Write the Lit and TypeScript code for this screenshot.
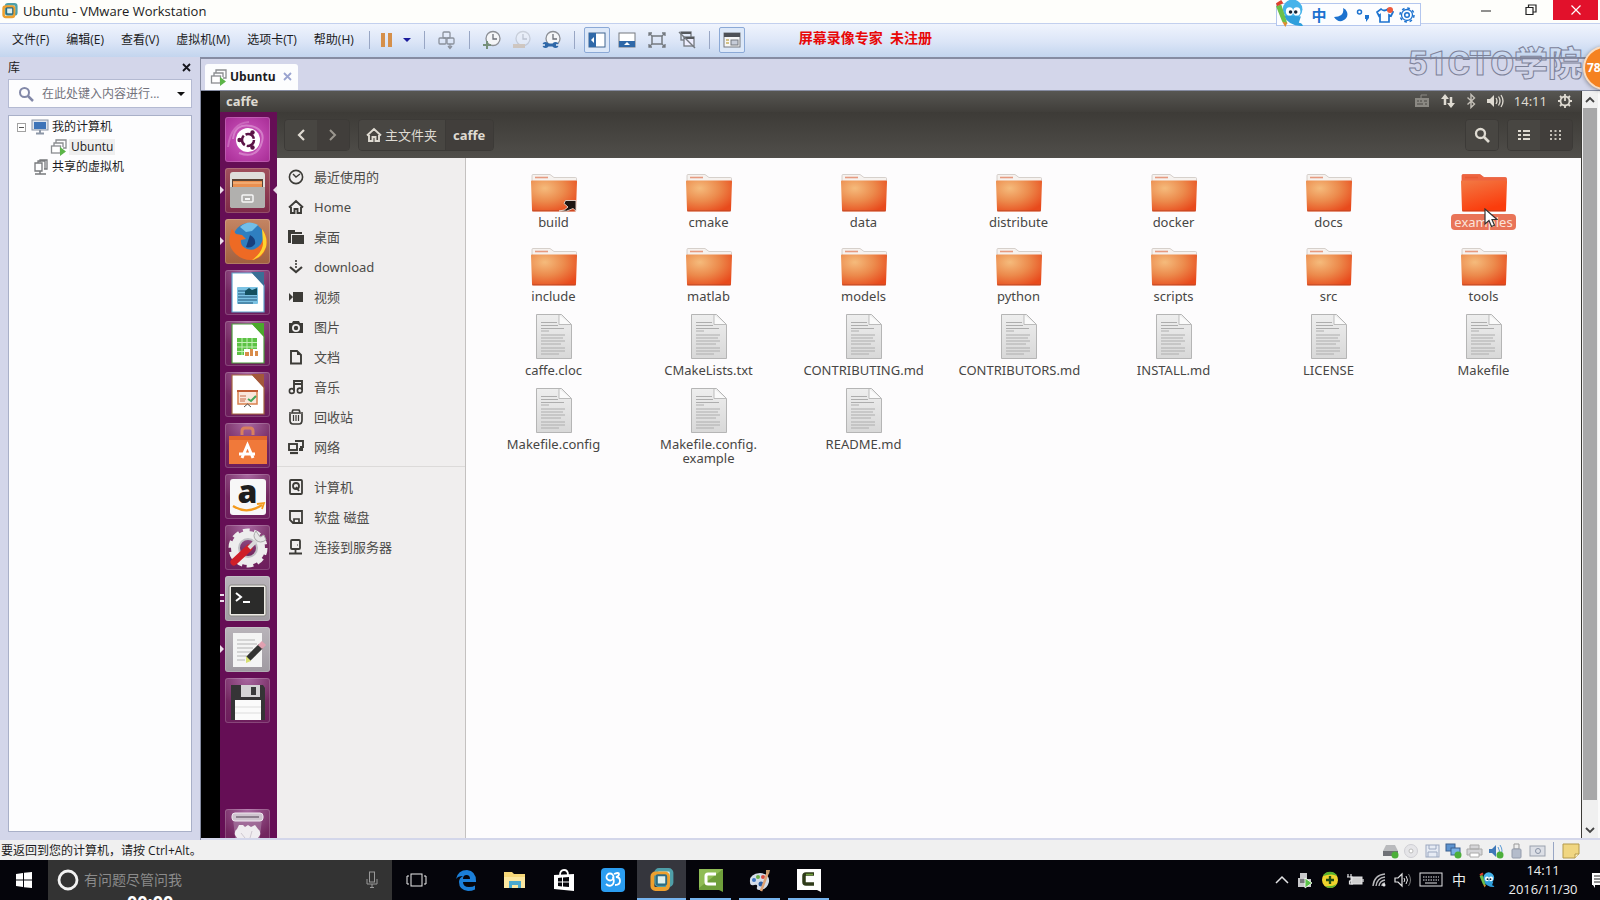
import { LitElement, html, svg, css, TemplateResult, SVGTemplateResult } from "lit";
import { customElement, state } from "lit/decorators.js";
import { classMap } from "lit/directives/class-map.js";

const icon = (w: number, h: number, body: SVGTemplateResult, box = `0 0 ${w} ${h}`) =>
  html`<svg width=${w} height=${h} viewBox=${box} fill="none" aria-hidden="true">${body}</svg>`;

/* ---------- VMware chrome icons ---------- */
const vmLogo = (size: number) => icon(size, size, svg`
  <rect x="5" y="1.500" width="13" height="13" rx="2.500" fill="#dff0ee" stroke="#4f9fa8" stroke-width="3"/>
  <rect x="2" y="4.500" width="13" height="13" rx="2.500" fill="none" stroke="#eea02e" stroke-width="3.200"/>
  <rect x="5.500" y="6" width="8" height="8" rx="1" fill="none" stroke="#2f6a80" stroke-width="1.600"/>`, "0 0 20 20");

const vmRunning = icon(18, 18, svg`
  <path d="M6 5V2h10v8h-3" stroke="#8a8d90" stroke-width="1.3"/><path d="M4 8V5h9v4" stroke="#8a8d90" stroke-width="1.3"/>
  <rect x="1.500" y="8" width="9" height="7" stroke="#8a8d90" stroke-width="1.3" fill="#fff"/>
  <path d="M10 9l6 4.500-6 4.500z" fill="#5cb548"/>`);
const sharedVm = icon(16, 18, svg`
  <path d="M7 4V2h7v9h-3M2 5h7v8H2zM5 5V3h7v8" stroke="#77797c" stroke-width="1.3"/><path d="M7 13v3M2 16h11" stroke="#77797c" stroke-width="1.500"/>`);
const monitor = icon(18, 16, svg`
  <rect x="1" y="1" width="16" height="10" fill="#dfe5ee" stroke="#8c96a6"/><rect x="3" y="3" width="12" height="7" fill="#3e74b8"/>
  <path d="M9 11v3M5 14.500h8" stroke="#8c96a6" stroke-width="2"/>`);
const magnifier = icon(16, 16, svg`<circle cx="6.500" cy="6.500" r="4.500" stroke="#8288a8" stroke-width="2"/><path d="M10 10l5 5" stroke="#8288a8" stroke-width="2.500"/>`);
const ctrlAltDel = icon(20, 20, svg`
  <rect x="6" y="2" width="7" height="6" rx="1" stroke="#8b919c" stroke-width="1.3"/>
  <rect x="2" y="8" width="7" height="6" rx="1" stroke="#8b919c" stroke-width="1.3"/><rect x="10" y="8" width="7" height="6" rx="1" stroke="#8b919c" stroke-width="1.3"/>
  <path d="M13 14v4m-2-2l2 2.500 2-2.500" stroke="#8b919c" stroke-width="1.3"/>`);
const clock = (kind: "add" | "back" | "manage") => icon(20, 20, svg`
  <g opacity=${kind === "back" ? 0.3 : 1}>
  <circle cx="11" cy="8.500" r="7" fill="#f5f6f8" stroke="#8d9096" stroke-width="1.3"/><path d="M11 4v5h4" stroke="#6c7078" stroke-width="1.3"/>
  ${kind === "add" ? svg`<path d="M1 15h8M5 11v8" stroke="#76907a" stroke-width="2"/>` : kind === "back"
    ? svg`<path d="M1 16h12" stroke="#c08a4a" stroke-width="4"/>`
    : svg`<path d="M3 15h10" stroke="#2f68a8" stroke-width="3"/><circle cx="3.500" cy="15" r="3" fill="#2f68a8"/><circle cx="13.500" cy="15" r="3" fill="#2f68a8"/><path d="M0 15h3M14 15h3" stroke="#e8eefa" stroke-width="1.500"/>`}
  </g>`);
const viewLibrary = icon(18, 16, svg`<rect x="1" y="1" width="16" height="14" fill="#fff" stroke="#41648f"/><rect x="1" y="1" width="7" height="14" fill="#2f68a8"/><path d="M6 5v6L3 8z" fill="#fff"/>`);
const viewThumb = icon(18, 16, svg`<rect x="1" y="1" width="16" height="14" fill="#fff" stroke="#74797f"/><rect x="1" y="9" width="16" height="6" fill="#2f68a8"/><path d="M6 13h6L9 10z" fill="#fff"/>`);
const fullScreen = icon(18, 16, svg`<rect x="4" y="4" width="10" height="8" stroke="#74797f" stroke-width="1.500"/><path d="M1 4V1h3M14 1h3v3M17 12v3h-3M4 15H1v-3M1 1l3 3M17 1l-3 3M17 15l-3-3M1 15l3-3" stroke="#74797f" stroke-width="1.300"/>`);
const unity = icon(18, 18, svg`<rect x="3" y="1" width="10" height="8" stroke="#74797f" stroke-width="1.300"/><path d="M3 2h10" stroke="#55585c" stroke-width="2"/><rect x="6" y="6" width="10" height="9" fill="#eef" stroke="#74797f" stroke-width="1.300"/><path d="M6 7h10" stroke="#55585c" stroke-width="2"/><path d="M1 1l16 16" stroke="#74797f" stroke-width="1.500"/>`);
const consoleView = icon(18, 16, svg`<rect x="1" y="1" width="16" height="14" fill="#f6f6f6" stroke="#74797f"/><rect x="1" y="1" width="16" height="4" fill="#4d5056"/><path d="M3 8h3M3 11h3" stroke="#c7b060" stroke-width="1.500"/><rect x="8" y="8" width="7" height="5" fill="#c6ccd8" stroke="#74797f"/>`);

/* ---------- Guest panel icons ---------- */
const S = "#dfdbd2";
const panelKeyboard = icon(16, 16, svg`<path d="M7 5V2h6" stroke="#8b8983"/><rect x="1" y="5" width="14" height="9" fill="#8b8983"/><path d="M3 8h2m1 0h2m2 0h3M3 11h6m2 0h2" stroke="#4a4844"/>`);
const panelNet = icon(16, 16, svg`<path d="M5 12V3M11 4v9" stroke=${S} stroke-width="2.500"/><path d="M1 6l4-5 4 5zM7 10l4 5 4-5z" fill=${S}/>`);
const bluetooth = icon(10, 16, svg`<path d="M1.500 4.500l7 6.500L5 14.500v-13L8.500 5l-7 6.500" stroke="#c4c0b8" stroke-width="1.400"/>`);
const panelSound = icon(18, 16, svg`<path d="M1 6h3l4-4v12l-4-4H1z" fill=${S}/><path d="M10 5q2 3 0 6M12.500 3.500q3 4.500 0 9M15 2q4 6 0 12" stroke=${S} stroke-width="1.300"/>`);
const panelGear = icon(16, 16, svg`<circle cx="8" cy="8" r="4.500" stroke=${S} stroke-width="1.800"/><path d="M8 1v7M3 3l2 2M13 3l-2 2M1 8h3M12 8h3M3 13l2-2M13 13l-2-2M8 12v3" stroke=${S} stroke-width="1.800"/>`);
const searchGlyph = icon(16, 16, svg`<circle cx="6.500" cy="6.500" r="4.500" stroke=${S} stroke-width="2.300"/><path d="M10 10l5 5" stroke=${S} stroke-width="2.600"/>`);
const listGlyph = icon(14, 12, svg`<path d="M1 2h3M1 6h3M1 10h3M6 2h7M6 6h7M6 10h7" stroke=${S} stroke-width="2"/>`);
const gridGlyph = icon(14, 12, svg`<path d="M1 2h12M1 6h12M1 10h12" stroke="#c4c0b8" stroke-width="2" stroke-dasharray="2 2.500"/>`);
const homeGlyph = (c: string) => icon(16, 16, svg`<path d="M1 8.500L8 2l7 6.500M3 8v6h3.500v-4h3v4H13V8" stroke=${c} stroke-width="1.900"/>`);

/* ---------- Sidebar icons ---------- */
const D = "#3c3b37";
const places: { label: string; glyph: TemplateResult }[] = [
  { label: "最近使用的", glyph: icon(16, 16, svg`<circle cx="8" cy="8" r="6.600" stroke=${D} stroke-width="1.600"/><path d="M5 5l3 3 4-3" stroke=${D} stroke-width="1.400"/>`) },
  { label: "Home", glyph: homeGlyph(D) },
  { label: "桌面", glyph: icon(16, 16, svg`<path d="M0 1h7v2h7v2H3v9H0z" fill=${D}/><path d="M4 6h12v9H4z" fill=${D}/>`) },
  { label: "download", glyph: icon(16, 16, svg`<path d="M8 1v8" stroke=${D} stroke-width="1.600" stroke-dasharray="2 1"/><path d="M2 8l6 5 6-5" stroke=${D} stroke-width="2.200"/>`) },
  { label: "视频", glyph: icon(16, 16, svg`<path d="M5 3h10v10H5zM1 4l4 4-4 4z" fill=${D}/>`) },
  { label: "图片", glyph: icon(16, 16, svg`<path fill-rule="evenodd" d="M1 4h3l1-2h6l1 2h3v10H1zM8 5a4 4 0 100 8 4 4 0 000-8z" fill=${D}/><circle cx="8" cy="9" r="2.200" fill=${D}/>`) },
  { label: "文档", glyph: icon(16, 16, svg`<path d="M3 2h6l4 4v8.500H3z" stroke=${D} stroke-width="1.900"/><path d="M9 2v4h4z" fill=${D}/>`) },
  { label: "音乐", glyph: icon(16, 16, svg`<path d="M6 12V2h8v9M6 5h8" stroke=${D} stroke-width="1.900"/><circle cx="3.800" cy="12" r="2.400" stroke=${D} stroke-width="1.600"/><circle cx="11.800" cy="11.500" r="2.400" stroke=${D} stroke-width="1.600"/>`) },
  { label: "回收站", glyph: icon(16, 16, svg`<path d="M1 4h14M4 3l1-2h6l1 2M2 5v6q0 4 3 4h6q3 0 3-4V5" stroke=${D} stroke-width="1.700"/><path d="M5.500 6v6M8 6v6M10.500 6v6" stroke=${D} stroke-width="1.200"/>`) },
  { label: "网络", glyph: icon(16, 16, svg`<rect x="1" y="5" width="8" height="6" stroke=${D} stroke-width="1.900"/><path d="M2 14h8" stroke=${D} stroke-width="2.200"/><path d="M7 2h8v6h-3" stroke=${D} stroke-width="1.900"/><path d="M11 9h4v3h-4z" fill=${D}/>`) },
];
const devices: { label: string; glyph: TemplateResult }[] = [
  { label: "计算机", glyph: icon(16, 16, svg`<rect x="2" y="1" width="12" height="14" rx="1" stroke=${D} stroke-width="1.800"/><circle cx="8" cy="7" r="3" stroke=${D} stroke-width="1.800"/><path d="M8 8l3 4" stroke=${D} stroke-width="1.800"/>`) },
  { label: "软盘 磁盘", glyph: icon(16, 16, svg`<path d="M2 2h12v12H5l-3-3z" stroke=${D} stroke-width="1.800"/><path d="M6 14v-4h5v4" stroke=${D} stroke-width="1.700"/>`) },
  { label: "连接到服务器", glyph: icon(16, 16, svg`<rect x="3" y="1" width="9" height="9" rx="1" stroke=${D} stroke-width="1.800"/><path d="M7.500 10v4M1 14.500h13" stroke=${D} stroke-width="1.800"/><path d="M9 6h1" stroke=${D}/>`) },
];

/* ---------- Launcher icons, drawn in a 45 px tile ---------- */
const tile = (body: SVGTemplateResult) => icon(45, 45, body);
const page = (edge: string, corner: string, inner: SVGTemplateResult) => tile(svg`
  <path d="M7 3h21l11 12v27H7z" fill="#fff" stroke=${edge} stroke-width="1.200"/><path d="M26 2h13v14z" fill=${corner}/>${inner}`);
interface Launch { name: string; tone: string; art: TemplateResult; running?: "one" | "two"; focused?: boolean }
const launchers: Launch[] = [
  { name: "Dash", tone: "dash", art: tile(svg`
    <path d="M8 22q2-16 18-13Q42 13 36 28 30 42 14 36" stroke="#e3a2da" stroke-width="2" opacity=".6"/><path d="M3 30Q6 6 24 5" stroke="#e3a2da" stroke-width="2" opacity=".4"/>
    <circle cx="23" cy="23" r="12" fill="#fff"/><circle cx="23" cy="23" r="6" stroke="#5b1446" stroke-width="2.500" stroke-dasharray="10.500 2"/>
    <g fill="#5b1446"><circle cx="14.500" cy="23" r="2.200"/><circle cx="27.500" cy="15.500" r="2.200"/><circle cx="27.500" cy="30.500" r="2.200"/></g>`) },
  { name: "文件", tone: "files", running: "one", focused: true, art: tile(svg`
    <rect x="5" y="4" width="35" height="36" rx="3" fill="#dfdedb"/><rect x="7" y="11" width="31" height="8" fill="#5a4334"/>
    <path d="M8 13h29v6H8z" fill="#e98f50"/><path d="M8 15h29" stroke="#f8c391"/><path d="M5 19h35v19q0 2-2 2H7q-2 0-2-2z" fill="#b1b0ae"/>
    <rect x="17" y="27" width="11" height="7" rx="1" stroke="#f6f6f6" stroke-width="1.500"/><path d="M20 31h5" stroke="#f6f6f6" stroke-width="2"/>`) },
  { name: "Firefox", tone: "firefox", running: "one", art: tile(svg`
    <circle cx="24" cy="20" r="16" fill="#2f7fc0"/><path d="M15 8q8-8 18-2l-6 6-6 1z" fill="#72bee8"/><path d="M25 16q6 3 5 9-4 5-9 3z" fill="#173f7d"/>
    <path d="M6 12q-4 12 2 20 8 10 20 9 13-3 14-18 0-8-5-13 3 8-1 15-6 8-14 5-7-3-6-9l5-1-4-4-6-1-4-5z" fill="#ee6a24"/>
    <path d="M37 10q6 8 4 18-4 11-14 13 10-7 11-16z" fill="#ffd32e"/>`) },
  { name: "Writer", tone: "plum", art: page("#5fa5ce", "#3a6f96", svg`<rect x="12" y="17" width="21" height="17" rx="1" fill="#7cc3e4"/><path d="M13 21h8M13 24h8M13 27h19M13 30h19M13 33h15" stroke="#1f5578"/><path d="M20 25v-4l4-3 3 2 5-2v7z" fill="#14505f"/>`) },
  { name: "Calc", tone: "plum", art: page("#4b9c3d", "#4ba92c", svg`<rect x="12" y="17" width="20" height="17" fill="#5cc244"/><path d="M12 21.500h20M12 26h20M12 30.500h20M17 17v17M22 17v17M27 17v17" stroke="#c2f0b5"/><rect x="19" y="28" width="15" height="8" fill="#fff"/><path d="M20 35v-4h4v4zM25 35v-7h3v7zM30 35v-5h3v5z" fill="#d98c4a"/>`) },
  { name: "Impress", tone: "plum", art: page("#a5653f", "#a3573a", svg`<rect x="13" y="19" width="19" height="13" fill="#fae6db" stroke="#d9814d" stroke-width="1.500"/><path d="M12 19h21" stroke="#c05b34" stroke-width="2"/><path d="M15 24h6M15 27h6M15 29h5" stroke="#c76a48"/><path d="M23 27l3 2 5-5" stroke="#46a55a" stroke-width="2"/><path d="M19 35l3.500-3 3.500 3" stroke="#555"/>`) },
  { name: "软件中心", tone: "plum", art: tile(svg`
    <path d="M17 12V8q0-3 3-3h5q3 0 3 3v4" stroke="#d9805e" stroke-width="3"/><path d="M4 13h38v28H4z" fill="#f0793a"/><path d="M4 13h38v4H4z" fill="#e0642d"/>
    <path d="M17 35l5.500-13L28 35M17 31h13" stroke="#fff" stroke-width="3"/><path d="M14 31h3" stroke="#fff" stroke-width="3"/>`) },
  { name: "Amazon", tone: "plum", art: tile(svg`
    <rect x="5" y="5" width="36" height="36" rx="3" fill="#f7f7f7"/>
    <text x="22.500" y="29" text-anchor="middle" font-family="Open Sans" font-weight="800" font-size="32" fill="#1d1d1d">a</text>
    <path d="M8 32q14 9 29-1" stroke="#f39a1d" stroke-width="2.200"/><path d="M32 30l7-1-2 6" stroke="#f39a1d" stroke-width="1.800"/>`) },
  { name: "系统设置", tone: "plum", art: tile(svg`
    <circle cx="23" cy="23" r="13" stroke="#ededed" stroke-width="8"/><circle cx="23" cy="23" r="17" stroke="#ededed" stroke-width="5" stroke-dasharray="6.500 4.180"/>
    <circle cx="23" cy="23" r="9" stroke="#bfbfc4" stroke-width="2"/><path d="M9 37l15-14" stroke="#cf1f28" stroke-width="7" stroke-linecap="round"/><path d="M24 23l8-8" stroke="#d9d9d9" stroke-width="4"/>
    <path d="M31 6q-4 5 0 9t10 0l-2-5-4 2-2-3z" fill="#e6e6e6" stroke="#a9a9a9"/>`) },
  { name: "终端", tone: "silver", running: "two", art: tile(svg`
    <rect x="4" y="9" width="37" height="31" rx="2" fill="#eceae4" stroke="#8a8985"/><rect x="6" y="11" width="33" height="27" fill="#2b2b2a"/>
    <path d="M11 17l5 4-5 4" stroke="#fff" stroke-width="2"/><path d="M18 26h7" stroke="#fff" stroke-width="2"/>`) },
  { name: "gedit", tone: "silver", running: "one", art: tile(svg`
    <rect x="8" y="6" width="29" height="34" fill="#f4f4f4"/><path d="M12 13h18M12 17h20M12 21h16M12 25h14M12 29h10M12 33h8" stroke="#c9c9c9" stroke-width="1.500"/>
    <path d="M23 32l13-13" stroke="#333" stroke-width="6"/><path d="M35 20l4-4" stroke="#e0a0b0" stroke-width="6"/><path d="M21 29l5 5-5 2z" fill="#d8e070"/>`) },
  { name: "软盘", tone: "plum", art: tile(svg`
    <path d="M6 7h32l2 3v32H6z" fill="#353436"/><rect x="16" y="7" width="19" height="12" fill="#d4d3d5"/><rect x="26" y="9" width="5" height="8" fill="#3a3a3c"/>
    <rect x="10" y="22" width="26" height="20" fill="#fbfbfb"/><path d="M10 29h26M10 35h26" stroke="#ddd"/>`) },
];
const trashArt = tile(svg`
  <path d="M8 10l4 35h21l4-35z" fill="#b48fb2" opacity=".5"/><rect x="7" y="4" width="31" height="8" rx="3" fill="#cfc4cf" stroke="#f0e8f0"/><path d="M11 8h23" stroke="#8d7f8e" stroke-width="2"/>
  <path d="M10 26q-1-4 2-6l2-4h4l2 2 3-2 3 2 4-2 3 4q3 2 2 6l-2 3v16H12V29z" fill="#f0edf0"/><path d="M16 24l4 5M27 22l-2 7" stroke="#cfc8d0"/>`);

/* ---------- File icons ---------- */
const folder = (selected: boolean, link: boolean) => icon(48, 40, svg`
  <defs>
    <radialGradient id="face" cx=".3" cy=".25" r=".95"><stop offset="0" stop-color="#f5bb7c"/><stop offset=".45" stop-color="#ec8a4c"/><stop offset=".9" stop-color="#e84a1c"/></radialGradient>
    <linearGradient id="picked" x1="0" y1="0" x2=".4" y2="1"><stop offset="0" stop-color="#f27a45"/><stop offset="1" stop-color="#fb3c0c"/></linearGradient>
  </defs>
  <path d="M2 10V2.500q0-1 1-1h17l4 3h21.500q1 0 1 1V10z" fill=${selected ? "#ee6440" : "#f6f2ef"} stroke=${selected ? "#ea5c38" : "#cdc5c0"} stroke-width=".8"/>
  <path d="M5 4.500h13" stroke=${selected ? "#e85a35" : "#e69a80"} stroke-width="1.600"/>
  <path d="M1 8.500q0-1 1-1h44q1 0 1 1L46 37q0 1.500-1.500 1.500h-41Q2 38.500 2 37z" fill=${selected ? "url(#picked)" : "url(#face)"}/>
  <path d="M2 37.800h44" stroke="#a8452a" opacity=".6"/>
  ${link ? svg`<path d="M29 38q6 0 9-4l-4-3.500 1.500-3H46V38l-3-2.500q-6 4-14 2.500z" fill="#1e1512" stroke="#e8d8cf" stroke-width=".9"/>` : null}`);
const textFile = icon(38, 48, svg`
  <defs><linearGradient id="sheet" x1="0" y1="0" x2="0" y2="1"><stop offset="0" stop-color="#eeeeee"/><stop offset="1" stop-color="#d8d8d8"/></linearGradient></defs>
  <path d="M1.500 1.500h25l10 10v34h-35z" fill="url(#sheet)" stroke="#b5b5b5"/><path d="M24 2v9.500h12" fill="#fafafa" stroke="#bbb"/>
  <path d="M6 9.500h16M6 12.500h17M6 15.500h23M6 18h8M6 22h24M6 25h22M6 28h24M6 31h20M6 35h24M6 38h24M6 41h18" stroke="#adadad" stroke-width="1.100"/>`);

const files = [
  "build", "cmake", "data", "distribute", "docker", "docs", "examples",
  "include", "matlab", "models", "python", "scripts", "src", "tools",
  "caffe.cloc", "CMakeLists.txt", "CONTRIBUTING.md", "CONTRIBUTORS.md", "INSTALL.md", "LICENSE", "Makefile",
  "Makefile.config", "Makefile.config.example", "README.md",
].map((name, i) => ({ name, dir: i < 14, link: name === "build" }));

/* ---------- Status bar icons ---------- */
const ok = svg`<circle cx="13" cy="12" r="3.500" fill="#4caf3a"/>`;
const statusIcons: { name: string; art: TemplateResult }[] = [
  { name: "硬盘", art: icon(18, 16, svg`<path d="M4 2h9l3 6H1z" fill="#b9babd"/><path d="M1 8h15v5H1z" fill="#6f7176"/>${ok}`) },
  { name: "光驱", art: icon(18, 16, svg`<circle cx="8" cy="8" r="6.500" fill="#e5e5e8" stroke="#cfcfd4"/><circle cx="8" cy="8" r="2" fill="#fff" stroke="#bbb"/>`) },
  { name: "软盘", art: icon(18, 16, svg`<rect x="2" y="2" width="13" height="12" fill="#e6ebf4" stroke="#9ba8c0"/><path d="M5 2v4h7V2M4 14V9h9v5" stroke="#9ba8c0"/>`) },
  { name: "网络适配器", art: icon(18, 16, svg`<rect x="1" y="1" width="9" height="7" fill="#5c93cf" stroke="#3a5f8e"/><rect x="6" y="5" width="9" height="7" fill="#7ab0e6" stroke="#3a5f8e"/>${ok}`) },
  { name: "打印机", art: icon(18, 16, svg`<path d="M4 2h9v4H4zM1 6h15v6H1z" fill="#d5d5d8" stroke="#aaa"/><path d="M4 10h9v4H4z" fill="#fff" stroke="#aaa"/>`) },
  { name: "声卡", art: icon(18, 16, svg`<path d="M2 6h3l4-4v12l-4-4H2z" fill="#3e78b8"/><path d="M11 4q3 4 0 8M13 2q4 6 0 11" stroke="#5b9bd5"/>${ok}`) },
  { name: "USB", art: icon(18, 16, svg`<path d="M6 1h5v5H6z" fill="#eee" stroke="#999"/><rect x="4" y="6" width="9" height="9" rx="1" fill="#b4bccb" stroke="#949cac"/>`) },
  { name: "显示器", art: icon(18, 16, svg`<rect x="1" y="3" width="15" height="10" fill="#dcdfe6" stroke="#9aa1ae"/><circle cx="9" cy="8" r="2.500" stroke="#8892a5"/>`) },
];

/* ---------- Windows taskbar icons ---------- */
const taskItems: { name: string; art: TemplateResult; run?: boolean; active?: boolean }[] = [
  { name: "任务视图", art: icon(22, 16, svg`<rect x="5" y="2" width="11" height="12" stroke="#eee"/><path d="M3 4H1v8h2M18 4h2v8h-2" stroke="#eee"/>`) },
  { name: "Edge", art: icon(22, 22, svg`<path d="M1 10Q3 1 12 1q9 1 9 11v1H8q0 5 6 5 4 0 6-1.500v4Q17 22 13 22 4 21 4 13q0-4 4-6-5 0-7 3zM8 10h7q0-4-3.500-4T8 10z" fill="#1b7fd8"/>`) },
  { name: "文件资源管理器", art: icon(24, 20, svg`<path d="M1 2h8l2 2h11v14H1z" fill="#f6d778"/><path d="M1 7h21v11H1z" fill="#fbe7a0"/><path d="M6 18v-7h12v7h-3v-3H9v3z" fill="#4ba9cf"/>`) },
  { name: "应用商店", art: icon(24, 24, svg`<path d="M8 7q0-5 4-5t4 5" stroke="#fff" stroke-width="1.800"/><path d="M2 7l20-1v17L2 21z" fill="#fff"/><path d="M6 10l4-.5v4H6zM11 9.500l6-.5v4.500h-6zM6 14.500h4v4l-4-.5zM11 14.500h6V19l-6-.5z" fill="#07070c"/>`) },
  { name: "剪辑", art: icon(24, 24, svg`<rect width="24" height="24" rx="4" fill="#2b9df0"/><circle cx="9" cy="9" r="3.500" stroke="#fff" stroke-width="1.800"/><path d="M12 9q2 6-1 8-3 2-6-1M13 6q5-2 5 0t-3 3q4 0 4 4t-5 4" stroke="#fff" stroke-width="1.800"/>`) },
  { name: "VMware Workstation", art: vmLogo(24), run: true, active: true },
  { name: "Camtasia", art: icon(24, 24, svg`<path d="M0 1h24v23l-4-2H0z" fill="#6f9f3b"/><path d="M0 1h24L0 20z" fill="#8fbc55"/><path d="M17 6H9q-2 0-2 2v6q0 2 2 2h8" stroke="#fff" stroke-width="3"/>`), run: true },
  { name: "画图", art: icon(24, 24, svg`<path d="M2 14Q1 6 12 5q10 1 9 9-2 8-10 8-3 0-2-3t-3-2q-4 1-4-3z" fill="#d4dde8"/><circle cx="6" cy="12" r="2" fill="#3a75c4"/><circle cx="10" cy="9" r="2" fill="#6bb04a"/><circle cx="15" cy="9" r="2" fill="#d94c3f"/><circle cx="13" cy="16" r="2.500" fill="#2c5fa8"/><path d="M13 23l7-19" stroke="#e0a374" stroke-width="2.500"/><path d="M18 2h4l-1 4-3-1z" fill="#c49a6c"/>`), run: true },
  { name: "Camtasia Recorder", art: icon(24, 24, svg`<path d="M0 1h24v23l-4-2H0z" fill="#fff"/><path d="M17 6H9Q7 6 7 8v6q0 2 2 2h8" stroke="#2f3b1a" stroke-width="3.500"/><path d="M16 6.500H9" stroke="#6f9f3b" stroke-width="1.500"/>`), run: true },
];
const genie = (size: number) => icon(size, size, svg`
  <circle cx="17" cy="10" r="9.500" fill="#45b3ea"/><path d="M8 16q6 11 19 10-1-3-4-3l2-6z" fill="#2f9fdc"/>
  <path d="M1 7l5-2 6 19-5-2z" fill="#6cc04a"/><path d="M1 4l5-3 2 3-6 3z" fill="#e0402c"/><path d="M7 22l3 5 2-4z" fill="#e08a2c"/>
  <ellipse cx="14" cy="12" rx="3.500" ry="4" fill="#fff"/><ellipse cx="21" cy="12" rx="3.500" ry="4" fill="#fff"/><circle cx="15" cy="12.500" r="1.700" fill="#123"/><circle cx="20" cy="12.500" r="1.700" fill="#123"/>`, "0 0 28 28");
const W = "#e4e4e6";
const trayItems: { name: string; art: TemplateResult }[] = [
  { name: "显示隐藏的图标", art: icon(14, 10, svg`<path d="M1 8l6-6 6 6" stroke=${W} stroke-width="1.500"/>`) },
  { name: "虚拟机", art: icon(18, 18, svg`<path d="M4 2h7v6h4v8H2V7h2z" fill="#c9c9cb"/><path d="M4 8h5v4H4z" fill="#77797c"/><path d="M9 7l7 5-7 5z" fill="#5cc24a" stroke="#fff" stroke-width=".8"/>`) },
  { name: "安全卫士", art: icon(18, 18, svg`<circle cx="9" cy="9" r="8" fill="#f0d32c"/><path d="M2 5a8 8 0 0114 0q-5-3-14 0zM16 13a8 8 0 01-12 2q7 1 12-2z" fill="#57b32e"/><path d="M5 9h8M9 5v8" stroke="#1e4d14" stroke-width="2.300"/>`) },
  { name: "电池", art: icon(18, 14, svg`<rect x="5" y="4" width="11" height="7" fill="#cfcfd0" stroke=${W}/><path d="M17 6v3M2 1v3M5 1v3M1 4h5v2q0 2-2.500 2v3H7" stroke=${W} stroke-width="1.200"/>`) },
  { name: "Wi-Fi", art: icon(16, 16, svg`<path d="M2 14Q3 3 14 2M5 14q1-8 9-9M8 14q.5-5 6-6M11 14q0-2.500 3-3" stroke="#b9b9bc" stroke-width="1.400"/><circle cx="13" cy="13" r="1.500" fill=${W}/>`) },
  { name: "音量", art: icon(18, 16, svg`<path d="M1 6h3l4-4v12l-4-4H1z" stroke=${W} stroke-width="1.200"/><path d="M10 6q1.500 2 0 4M12 4q3 4 0 8" stroke=${W}/><path d="M14.500 2q4 6 0 12" stroke="#777"/>`) },
];
const keyboard = icon(24, 16, svg`<rect x="1" y="1" width="22" height="13" stroke=${W}/><path d="M4 5h16M4 8h16" stroke=${W} stroke-width="1.200" stroke-dasharray="1.500 1"/><path d="M6 11h12" stroke=${W}/>`);

@customElement("app-root")
export class AppRoot extends LitElement {
  @state() private selected = "examples";

  static styles = css`
    :host { display: block; height: 100vh; overflow: hidden; position: relative; color: #1b1b22;
      font: 12px/16px "Open Sans", "Noto Sans CJK SC", sans-serif; }
    * { box-sizing: border-box; }
    svg { display: block; flex: none; }
    button { font: inherit; color: inherit; background: none; border: 0; padding: 0; margin: 0; display: flex; align-items: center; justify-content: center; }
    input { font: inherit; color: inherit; background: none; border: 0; padding: 0; outline: 0; min-width: 0; }
    ul { list-style: none; margin: 0; padding: 0; }
    .sr { position: absolute; width: 1px; height: 1px; overflow: hidden; clip-path: inset(50%); }
    .screen { height: 100%; display: flex; flex-direction: column; background: #d3d6ea; }

    .title { height: 23px; flex: none; display: flex; align-items: center; background: #fefefb; padding: 0 0 2px 2px; font-size: 13px; }
    .title h1 { font: inherit; margin: 0 auto 0 5px; }
    .title button { width: 45px; height: 20px; align-self: flex-start; }
    .title .close { background: #e2112b; margin-right: 2px; }

    .menu { height: 34px; flex: none; display: flex; align-items: center; padding: 0 4px 2px; border-top: 1px solid #c3d0ee; background: linear-gradient(#f0f4fd, #dbe5f7 55%, #c3d5ee); }
    .words { display: flex; gap: 1px; }
    .menu .word { padding: 0 8px; white-space: nowrap; }
    .sep { width: 1px; height: 18px; background: #98a6c4; margin: 0 7px; flex: none; }
    .menu .tool { width: 30px; height: 26px; }
    .menu .on { width: 26px; border: 1px solid #8ba9d6; background: #dde8f8; border-radius: 2px; margin: 0 2px; }
    .menu .drop { width: 20px; }
    .notice { margin: 0 0 4px 52px; font-size: 14px; font-weight: 700; color: #e80808; white-space: pre; }

    .work { flex: 1; min-height: 0; display: flex; }
    .library { width: 200px; flex: none; padding: 0 8px 8px; display: flex; flex-direction: column; }
    .library header { height: 22px; display: flex; align-items: center; justify-content: space-between; }
    .library h2 { font: inherit; margin: 0; }
    .find { height: 29px; display: flex; align-items: center; background: #fdfdfe; border: 1px solid #b4bad2; padding: 0 6px 0 9px; margin-bottom: 7px; }
    .find input { flex: 1; margin-left: 8px; }
    .find input::placeholder { color: #72727c; opacity: 1; }
    .tree { flex: 1; background: #fdfdfe; border: 1px solid #a9b0c8; padding: 1px 0 0 8px; }
    .tree div { height: 20px; display: flex; align-items: center; gap: 3px; }
    .tree .root svg:first-child { margin-right: 2px; }
    .tree .child { padding-left: 33px; gap: 1px; }
    .tree .child span { background: #efefef; padding: 0 2px; }
    .tree .shared { padding-left: 16px; }

    .view { flex: 1; min-width: 0; display: flex; flex-direction: column; border-top: 2px solid #868ca2; border-left: 1px solid #868ca2; padding-bottom: 2px; }
    .tabs { height: 32px; flex: none; display: flex; align-items: flex-end; padding-left: 4px; border-bottom: 1px solid #868ca2; }
    .tab { height: 26px; display: flex; align-items: center; gap: 2px; padding: 0 2px 0 5px; background: #fcfdfe; border-radius: 3px 3px 0 0; font-weight: 700; }
    .tab button { margin-left: 2px; width: 16px; height: 16px; }
    .console { flex: 1; min-height: 0; display: flex; }
    .guest { flex: 1; min-width: 0; display: flex; flex-direction: column; border-left: 19px solid #000; border-right: 1px solid #3c3b37;
      font: 13px/16px "Noto Sans", "Noto Sans CJK SC", sans-serif; }
    .panel { height: 21px; flex: none; display: flex; align-items: center; gap: 10px; padding: 0 8px 2px 6px; color: #dfdbd2; background: linear-gradient(#575652, #403e3a); }
    .panel strong { margin-right: auto; }
    .shell { flex: 1; min-height: 0; display: flex; }
    .launcher { width: 57px; flex: none; display: flex; flex-direction: column; gap: 6px; padding: 5px 0 0 5px; background: #650e55; overflow: hidden; }
    .slot { position: relative; width: 45px; height: 45px; flex: none; }
    .slot button { width: 45px; height: 45px; border-radius: 3px; overflow: hidden; box-shadow: inset 0 0 0 1px rgba(255, 255, 255, .18); }
    .slot.bin { margin-top: auto; height: 29px; overflow: hidden; }
    .plum { background: radial-gradient(circle at 50% 0, #a868a0, #72265f 60%, #6c1c5c); }
    .dash { background: radial-gradient(circle, #d35dc4, #a62b94); }
    .files { background: linear-gradient(#a0505c, #7d2948); }
    .firefox { background: linear-gradient(#c48563, #a1603f); }
    .silver { background: linear-gradient(#b9b4ba, #9f9aa1); }
    .mark, .focus { position: absolute; top: 18px; width: 0; border: 4px solid transparent; }
    .mark { left: -5px; border-left-color: #eadce8; border-right-width: 0; }
    .focus { right: -7px; border-right-color: #eadce8; border-left-width: 0; }
    .two { height: 8px; width: 4px; border: solid #eadce8; border-width: 2px 0; }

    .window { flex: 1; min-width: 0; display: flex; flex-direction: column; }
    .toolbar { height: 46px; flex: none; display: flex; align-items: center; padding: 0 8px 0 7px; color: #dfdbd2; background: linear-gradient(#3d3b37, #504e4a); }
    .group { display: flex; height: 32px; border: 1px solid #3c3a37; border-radius: 4px; overflow: hidden; }
    .group button { width: 32px; background: #484642; }
    .group .sunk { background: #413e3b; }
    .group.path { margin: 0 auto 0 8px; }
    .group.path button { width: auto; padding: 0 8px 0 7px; gap: 3px; }
    .group.path .here { font-weight: 700; border-left: 1px solid #3c3a37; }
    .group.look { margin-left: 8px; }
    .body { flex: 1; min-height: 0; display: flex; }
    .places { width: 189px; flex: none; background: #f0eeee; border-right: 1px solid #c4c1c0; padding-top: 4px; color: #4c4b48; }
    .places li button { width: 100%; height: 30px; justify-content: flex-start; gap: 10px; padding-left: 11px; }
    .places ul + ul { margin-top: 4px; padding-top: 5px; border-top: 1px solid #dcdad9; }
    .files-grid { flex: 1; align-self: stretch; background: #fdfcfd; padding: 7px 10px; display: grid; grid-template-columns: repeat(auto-fill, 155px); grid-auto-rows: 74px; }
    .file { position: relative; flex-direction: column; justify-content: flex-start; color: #474644; line-height: 14px; }
    .file .art { height: 48px; display: flex; align-items: flex-end; justify-content: center; }
    .file .label { margin-top: 1px; max-width: 126px; padding: 1px 3px; border-radius: 4px; }
    .file.picked .label { background: #e97458; color: #fbe3da; }
    .cursor { position: absolute; left: 50%; top: 43px; }

    .scroll { width: 18px; flex: none; background: #f0f0f0; display: flex; flex-direction: column; border-right: 2px solid #fafafa; }
    .scroll button { height: 17px; }
    .scroll .track { flex: 1; }
    .scroll .thumb { height: 97%; background: #a8a8a9; margin: 0 1px; }

    .status { height: 20px; flex: none; background: #f0f0f0; display: flex; align-items: center; gap: 3px; padding: 2px 20px 0 1px; }
    .status span { margin-right: auto; }
    .status .sep { margin: 0 5px 0 3px; }

    .taskbar { height: 40px; flex: none; background: #05050b; display: flex; color: #ededed; }
    .start { width: 48px; }
    .ask { width: 344px; background: #333; display: flex; align-items: center; padding: 0 14px 0 9px; gap: 5px; font-size: 14px; }
    .ask input { flex: 1; }
    .ask input::placeholder { color: #8b8b8b; opacity: 1; }
    .task { width: 49px; position: relative; }
    .task.active { background: #35363d; }
    .task.run::after { content: ""; position: absolute; left: 4px; right: 4px; bottom: 0; height: 2px; background: #76b4ee; }
    .task.active::after { left: 0; right: 0; }
    .tray { margin-left: auto; display: flex; align-items: center; gap: 7px; font-size: 14px; }
    .tray .lang { margin: 0 6px 0 2px; }
    .tray time { margin: 0 4px; width: 74px; font-size: 13px; line-height: 19px; text-align: center; }

    .ime { position: absolute; top: 3px; right: 179px; height: 23px; display: flex; align-items: center; gap: 4px; padding: 0 4px 0 33px; background: #fcfdff; border: 1px solid #b3c6ee; color: #1c72cf; font-size: 15px; font-weight: 700; }
    .ime .genie { position: absolute; left: -2px; top: -5px; }
    .ime button { width: 18px; }
    .brand { position: absolute; right: 18px; top: 37px; display: flex; align-items: center; color: transparent; -webkit-text-stroke: 1px #7d8299; font-weight: 900; font-size: 34px; line-height: 52px; }
    .brand b { font: 900 34px/52px Roboto, "Open Sans", sans-serif; }
    .badge { position: absolute; right: -27px; top: 46px; width: 44px; height: 44px; border-radius: 50%; background: #f58220; border: 2px solid #f9dcc0; color: #fff; font-weight: 700; line-height: 40px; padding-left: 2px; box-shadow: 0 1px 4px rgba(0, 0, 0, .4); }
    .timer { position: absolute; left: 127px; bottom: -12px; color: #fff; font: 700 18px/20px "Open Sans", sans-serif; }
  `;

  private place(p: { label: string; glyph: TemplateResult }) {
    return html`<li><button>${p.glyph}${p.label}</button></li>`;
  }

  private launch(l: Launch) {
    return html`<li class="slot">
      <button class=${l.tone} aria-label=${l.name}>${l.art}</button>
      ${l.running ? html`<i class=${classMap({ mark: true, two: l.running === "two" })}></i>` : null}
      ${l.focused ? html`<i class="focus"></i>` : null}
    </li>`;
  }

  private file(f: { name: string; dir: boolean; link: boolean }) {
    const picked = f.name === this.selected;
    const [head, tail] = f.name.length > 18 ? [f.name.slice(0, 16), f.name.slice(16)] : [f.name, ""];
    return html`<button class=${classMap({ file: true, picked })} @click=${() => (this.selected = f.name)}>
      <span class="art">${f.dir ? folder(picked, f.link) : textFile}</span>
      <span class="label">${head}${tail ? html`<wbr>${tail}` : null}</span>
      ${picked ? html`<i class="cursor">${icon(14, 20, svg`<path d="M1 1v15l4-3.500 2.500 6 3-1.300-2.500-5.700h5z" fill="#fff" stroke="#333" stroke-width="1.200"/>`)}</i>` : null}
    </button>`;
  }

  render() {
    return html`
    <div class="screen">
      <header class="title">
        ${vmLogo(16)}
        <h1>Ubuntu - VMware Workstation</h1>
        <button aria-label="最小化">${icon(12, 12, svg`<path d="M1 7h10" stroke="#222"/>`)}</button>
        <button aria-label="还原">${icon(12, 12, svg`<path d="M1 3.500h7v7H1zM3.500 3V1H11v7H8.500" stroke="#222" stroke-width="1.200"/>`)}</button>
        <button class="close" aria-label="关闭">${icon(12, 12, svg`<path d="M1.500 1.500l9 9M10.500 1.500l-9 9" stroke="#fff" stroke-width="1.200"/>`)}</button>
      </header>

      <nav class="menu">
        <div class="words">${["文件(F)", "编辑(E)", "查看(V)", "虚拟机(M)", "选项卡(T)", "帮助(H)"].map((m) => html`<button class="word">${m}</button>`)}</div>
        <i class="sep"></i>
        <button class="drop" aria-label="暂停">${icon(14, 16, svg`<path d="M1 1h4v14H1zM8 1h4v14H8z" fill="#d58f4a"/>`)}</button>
        <button class="drop" aria-label="电源选项">${icon(8, 6, svg`<path d="M0 1h8L4 5z" fill="#1b1b9c"/>`)}</button>
        <i class="sep"></i>
        <button class="tool" aria-label="发送 Ctrl+Alt+Del">${ctrlAltDel}</button>
        <i class="sep"></i>
        <button class="tool" aria-label="拍摄快照">${clock("add")}</button>
        <button class="tool" aria-label="恢复快照">${clock("back")}</button>
        <button class="tool" aria-label="管理快照">${clock("manage")}</button>
        <i class="sep"></i>
        <button class="tool on" aria-label="显示库">${viewLibrary}</button>
        <button class="tool" aria-label="显示缩略图">${viewThumb}</button>
        <button class="tool" aria-label="全屏">${fullScreen}</button>
        <button class="tool" aria-label="Unity">${unity}</button>
        <i class="sep"></i>
        <button class="tool on" aria-label="控制台视图">${consoleView}</button>
        <span class="notice">屏幕录像专家  未注册</span>
      </nav>

      <main class="work">
        <aside class="library">
          <header><h2>库</h2><button aria-label="关闭库">${icon(10, 10, svg`<path d="M1 1l7 7M8 1L1 8" stroke="#15151c" stroke-width="1.800"/>`)}</button></header>
          <div class="find">
            ${magnifier}
            <label class="sr" for="find">搜索</label><input id="find" placeholder="在此处键入内容进行..." />
            <button aria-label="搜索选项">${icon(8, 6, svg`<path d="M0 1h8L4 5z" fill="#111"/>`)}</button>
          </div>
          <div class="tree">
            <div class="root">${icon(9, 9, svg`<rect x=".5" y=".5" width="8" height="8" fill="#fff" stroke="#a2a2a2"/><path d="M2 4.500h5" stroke="#555"/>`)}${monitor}<span>我的计算机</span></div>
            <div class="child">${vmRunning}<span>Ubuntu</span></div>
            <div class="shared">${sharedVm}共享的虚拟机</div>
          </div>
        </aside>

        <section class="view">
          <div class="tabs"><div class="tab">${vmRunning}Ubuntu<button aria-label="关闭标签">${icon(10, 10, svg`<path d="M1 1l7 7M8 1L1 8" stroke="#9aa4d0" stroke-width="1.800"/>`)}</button></div></div>
          <div class="console">
            <div class="guest">
              <div class="panel"><strong>caffe</strong>${panelKeyboard}${panelNet}${bluetooth}${panelSound}<span>14:11</span>${panelGear}</div>
              <div class="shell">
                <ul class="launcher">
                  ${launchers.map((l) => this.launch(l))}
                  <li class="slot bin"><button class="plum" aria-label="回收站">${trashArt}</button></li>
                </ul>
                <div class="window">
                  <div class="toolbar">
                    <div class="group">
                      <button aria-label="后退">${icon(10, 14, svg`<path d="M8 2L3 7l5 5" stroke=${S} stroke-width="2.200"/>`)}</button>
                      <button class="sunk" aria-label="前进">${icon(10, 14, svg`<path d="M2 2l5 5-5 5" stroke="#9b978f" stroke-width="2"/>`)}</button>
                    </div>
                    <div class="group path"><button>${homeGlyph(S)}主文件夹</button><button class="here sunk">caffe</button></div>
                    <div class="group"><button aria-label="搜索">${searchGlyph}</button></div>
                    <div class="group look"><button aria-label="列表视图">${listGlyph}</button><button class="sunk" aria-label="图标视图">${gridGlyph}</button></div>
                  </div>
                  <div class="body">
                    <nav class="places"><ul>${places.map((p) => this.place(p))}</ul><ul>${devices.map((p) => this.place(p))}</ul></nav>
                    <div class="files-grid">${files.map((f) => this.file(f))}</div>
                  </div>
                </div>
              </div>
            </div>
            <div class="scroll">
              <button aria-label="向上滚动">${icon(10, 8, svg`<path d="M1 6l4-4 4 4" stroke="#444" stroke-width="1.800"/>`)}</button>
              <div class="track"><div class="thumb"></div></div>
              <button aria-label="向下滚动">${icon(10, 8, svg`<path d="M1 2l4 4 4-4" stroke="#444" stroke-width="1.800"/>`)}</button>
            </div>
          </div>
        </section>
      </main>

      <footer class="status">
        <span>要返回到您的计算机，请按 Ctrl+Alt。</span>
        ${statusIcons.map((s) => html`<button aria-label=${s.name}>${s.art}</button>`)}
        <i class="sep"></i>
        <button aria-label="消息">${icon(18, 16, svg`<path d="M1 1h16v10l-4 4H1z" fill="#f0d681" stroke="#b49a4c"/><path d="M17 11h-4v4" fill="#fff3c4" stroke="#b49a4c"/>`)}</button>
      </footer>

      <footer class="taskbar">
        <button class="start" aria-label="开始">${icon(18, 18, svg`<path d="M1 3l7-1v6.500H1zM9 1.800L17 1v7.500H9zM1 9.500h7V16l-7-1zM9 9.500h8V17l-8-.8z" fill="#fff"/>`)}</button>
        <div class="ask">
          ${icon(22, 22, svg`<circle cx="11" cy="11" r="9" stroke="#f2f2f2" stroke-width="2.800"/>`)}
          <label class="sr" for="ask">搜索 Windows</label><input id="ask" placeholder="有问题尽管问我" />
          <button aria-label="语音">${icon(12, 18, svg`<rect x="3.500" y="1" width="5" height="10" stroke="#999"/><path d="M1 8v5h10V8M6 13v4M4 16.500h4" stroke="#999"/>`)}</button>
        </div>
        ${taskItems.map((t) => html`<button class=${classMap({ task: true, run: !!t.run, active: !!t.active })} aria-label=${t.name}>${t.art}</button>`)}
        <div class="tray">
          ${trayItems.map((t) => html`<button aria-label=${t.name}>${t.art}</button>`)}
          <button aria-label="触摸键盘">${keyboard}</button>
          <button class="lang">中</button>
          <button aria-label="输入法">${genie(16)}</button>
          <time>14:11<br />2016/11/30</time>
          <button aria-label="操作中心">${icon(9, 18, svg`<path d="M1 2h8v12H4l0 3-2-3H1z" fill="#fff"/><path d="M3 5h6M3 8h6M3 11h6" stroke="#222"/>`)}</button>
        </div>
      </footer>
    </div>

    <div class="ime">
      <span class="genie">${genie(29)}</span>
      <button>中</button>
      <button aria-label="半角">${icon(14, 14, svg`<path d="M9 0q2 9-9 9 3 5 8 4 7-3 5-9-1-3-4-4z" fill="#1c72cf"/>`)}</button>
      <button aria-label="中文标点">${icon(14, 14, svg`<circle cx="3.500" cy="4" r="2" stroke="#1c72cf" stroke-width="1.500"/><path d="M9 7h4v3l-3 4v-3H9z" fill="#1c72cf"/>`)}</button>
      <button aria-label="皮肤">${icon(18, 16, svg`<path d="M5 2q3 3 7 0l5 3-2 4-2-1v7H4V8L3 9 1 5z" stroke="#1c72cf" stroke-width="1.700"/><circle cx="14" cy="3" r="3" fill="#ee5a3c"/>`)}</button>
      <button aria-label="设置">${icon(16, 16, svg`<circle cx="8" cy="8" r="5.500" stroke="#1c72cf" stroke-width="1.300"/><circle cx="8" cy="8" r="2.300" stroke="#1c72cf" stroke-width="1.500"/><circle cx="8" cy="8" r="7" stroke="#1c72cf" stroke-width="1.500" stroke-dasharray="2.750 2.750"/>`)}</button>
    </div>
    <div class="brand"><b>51CTO</b>学院</div>
    <div class="badge">78</div>
    <div class="timer">00:00</div>`;
  }
}
